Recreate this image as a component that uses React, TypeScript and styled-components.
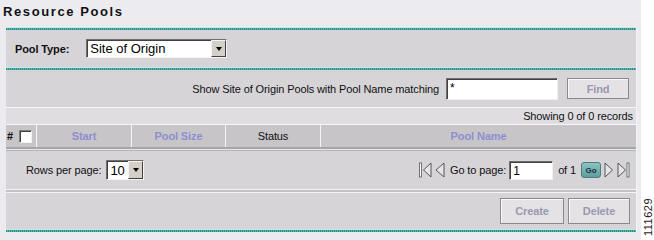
import styled, { createGlobalStyle } from "styled-components";

const Global = createGlobalStyle`
  html, body {
    margin: 0;
    padding: 0;
    background: #ffffff;
  }
  body {
    font-family: "Liberation Sans", Arial, sans-serif;
    font-size: 11px;
    letter-spacing: -0.12px;
    color: #111;
  }
`;

const Page = styled.div`
  display: flex;
  width: 654px;
  height: 240px;
  overflow: hidden;
`;

const Main = styled.div`
  width: 641px;
  height: 240px;
  background: #ebeaee;
  display: flex;
  flex-direction: column;
`;

const Side = styled.div`
  flex: 1;
  display: flex;
  flex-direction: column;
  justify-content: flex-end;
  align-items: center;
  padding-bottom: 4px;
`;

const FigNumber = styled.span`
  writing-mode: vertical-rl;
  transform: rotate(180deg);
  font-size: 11px;
  letter-spacing: 0.5px;
  color: #222;
`;

const TitleBar = styled.div`
  height: 22px;
  display: flex;
  align-items: center;
  padding-left: 3px;
  background: #ecebf0;
  border-bottom: 1px solid #f2e6e6;
  font-size: 13px;
  font-weight: bold;
  letter-spacing: 1.6px;
  color: #111;
`;

const Panel = styled.div`
  margin: 4px 4px 0 6px;
  display: flex;
  flex-direction: column;
  border-right: 1px solid #f4f4f4;
`;

const TealLine = styled.div`
  height: 3px;
  border-top: 1px solid #bfeeea;
  box-sizing: border-box;
  background: repeating-linear-gradient(
    90deg,
    #2f8a84 0px,
    #2f8a84 1px,
    #5cb8ae 1px,
    #5cb8ae 2px
  );
`;

const Row = styled.div<{ $h: number; $bg?: string; $justify?: string }>`
  height: ${({ $h }) => $h}px;
  display: flex;
  align-items: center;
  justify-content: ${({ $justify }) => $justify || "flex-start"};
  background: ${({ $bg }) => $bg || "#d6d4d7"};
  box-sizing: border-box;
`;

const Rule = styled.div<{ $color: string; $h?: number }>`
  height: ${({ $h }) => $h || 1}px;
  background: ${({ $color }) => $color};
`;

const Label = styled.span<{ $bold?: boolean }>`
  font-weight: ${({ $bold }) => ($bold ? "bold" : "normal")};
  white-space: nowrap;
`;

const Select = styled.div<{ $w: number; $h: number; $size: number }>`
  width: ${({ $w }) => $w}px;
  height: ${({ $h }) => $h}px;
  box-sizing: border-box;
  display: flex;
  align-items: center;
  background: #fff;
  border-top: 1px solid #6f6f6f;
  border-left: 1px solid #6f6f6f;
  border-right: 1px solid #f4f4f4;
  border-bottom: 1px solid #f4f4f4;
  box-shadow: inset 1px 1px 0 #404040;
  font-size: ${({ $size }) => $size}px;
  letter-spacing: 0;
  color: #000;
`;

const SelectText = styled.span`
  flex: 1;
  padding-left: 3px;
  white-space: nowrap;
`;

const ArrowBtn = styled.div`
  width: 15px;
  height: 100%;
  box-sizing: border-box;
  display: flex;
  align-items: center;
  justify-content: center;
  background: #d4d0c8;
  border-top: 1px solid #f4f4f4;
  border-left: 1px solid #f4f4f4;
  border-right: 1px solid #404040;
  border-bottom: 1px solid #404040;
  &::after {
    content: "";
    border-left: 3.5px solid transparent;
    border-right: 3.5px solid transparent;
    border-top: 4px solid #000;
  }
`;

const TextInput = styled.div<{ $w: number; $h: number }>`
  width: ${({ $w }) => $w}px;
  height: ${({ $h }) => $h}px;
  box-sizing: border-box;
  background: #fff;
  border-top: 1px solid #6f6f6f;
  border-left: 1px solid #6f6f6f;
  border-right: 1px solid #f0f0f0;
  border-bottom: 1px solid #f0f0f0;
  box-shadow: inset 1px 1px 0 #404040;
  padding: 2px 0 0 3px;
  font-size: 12px;
  color: #000;
`;

const Button = styled.div<{ $w: number; $h: number }>`
  width: ${({ $w }) => $w}px;
  height: ${({ $h }) => $h}px;
  box-sizing: border-box;
  display: flex;
  align-items: center;
  justify-content: center;
  background: #e4e2e4;
  border: 1px solid #8a8a8a;
  box-shadow: inset 1px 1px 0 #f8f8f8;
  font-weight: bold;
  font-size: 11px;
  color: #9a99b2;
`;

const GoButton = styled.div`
  width: 20px;
  height: 16px;
  box-sizing: border-box;
  display: flex;
  align-items: center;
  justify-content: center;
  background: linear-gradient(#8cc4c2, #5e9e9c);
  border: 1px solid #4c7c7c;
  border-radius: 3px;
  font-size: 8px;
  font-weight: bold;
  color: #1c2c48;
`;

const Header = styled.div`
  display: grid;
  grid-template-columns: 31px 95px 94px 95px 1fr;
  height: 22px;
  background: #c7c5c8;
  border-bottom: 2px solid #a6a5a8;
`;

const HeadCell = styled.div<{ $accent?: boolean }>`
  display: flex;
  align-items: center;
  justify-content: center;
  border-right: 1px solid #f4f4f4;
  font-weight: ${({ $accent }) => ($accent ? "bold" : "normal")};
  color: ${({ $accent }) => ($accent ? "#8e8ed2" : "#111")};
  &:last-child {
    border-right: none;
  }
`;

const SelCell = styled.div`
  display: flex;
  align-items: center;
  gap: 6px;
  padding-left: 1px;
  border-right: 1px solid #f4f4f4;
  font-weight: bold;
`;

const CheckBox = styled.div`
  width: 13px;
  height: 13px;
  box-sizing: border-box;
  background: #fff;
  border-top: 1px solid #808080;
  border-left: 1px solid #808080;
  border-right: 1px solid #f0f0f0;
  border-bottom: 1px solid #f0f0f0;
  box-shadow: inset 1px 1px 0 #404040;
`;

const Pager = styled.div`
  display: flex;
  align-items: center;
  gap: 3px;
`;

const Group = styled.div<{ $gap: number }>`
  display: flex;
  align-items: center;
  gap: ${({ $gap }) => $gap}px;
`;

const NavIcon = ({ dir, bar }: { dir: "left" | "right"; bar?: boolean }) => {
  const w = bar ? 13 : 10;
  const tri =
    dir === "left"
      ? bar
        ? "M12 1 L4.5 8 L12 15 Z"
        : "M9 1 L1 8 L9 15 Z"
      : "M1 1 L8.5 8 L1 15 Z";
  const barX = dir === "left" ? 1.5 : 11;
  return (
    <svg width={w} height={16} viewBox={`0 0 ${w} 16`}>
      {bar && <rect x={barX - 1} y={1} width={2} height={14} fill="#fff" stroke="#555" strokeWidth={0.8} />}
      <path d={tri} fill="#e6e6ea" stroke="#555" strokeWidth={1} strokeLinejoin="round" />
    </svg>
  );
};

export default function App() {
  return (
    <>
      <Global />
      <Page>
        <Main>
          <TitleBar>Resource Pools</TitleBar>
          <Panel>
            <TealLine />
            <Row $h={37} style={{ paddingLeft: 9, gap: 17 }}>
              <Label $bold>Pool Type:</Label>
              <Select $w={141} $h={19} $size={13}>
                <SelectText>Site of Origin</SelectText>
                <ArrowBtn />
              </Select>
            </Row>
            <TealLine />
            <Row $h={37} $justify="flex-end" style={{ paddingRight: 7 }}>
              <Group $gap={7}>
                <Label>Show Site of Origin Pools with Pool Name matching</Label>
                <TextInput $w={112} $h={22}>*</TextInput>
                <Button $w={62} $h={21} style={{ marginLeft: 2 }}>
                  Find
                </Button>
              </Group>
            </Row>
            <Rule $color="#f6f6f6" />
            <Row $h={16} $bg="#dfdde0" $justify="flex-end" style={{ paddingRight: 3 }}>
              <Label>Showing 0 of 0 records</Label>
            </Row>
            <Rule $color="#f6f6f6" />
            <Header>
              <SelCell>
                <span>#</span>
                <CheckBox />
              </SelCell>
              <HeadCell $accent>Start</HeadCell>
              <HeadCell $accent>Pool Size</HeadCell>
              <HeadCell>Status</HeadCell>
              <HeadCell $accent>Pool Name</HeadCell>
            </Header>
            <Rule $color="#e6e6e8" />
            <Rule $color="#b4b3b6" />
            <Row $h={38} $justify="space-between" style={{ padding: "0 6px 0 20px" }}>
              <Group $gap={5}>
                <Label>Rows per page:</Label>
                <Select $w={38} $h={20} $size={13}>
                  <SelectText>10</SelectText>
                  <ArrowBtn />
                </Select>
              </Group>
              <Pager>
                <NavIcon dir="left" bar />
                <NavIcon dir="left" />
                <Label style={{ marginLeft: 2 }}>Go to page:</Label>
                <TextInput $w={44} $h={19}>1</TextInput>
                <Label style={{ marginLeft: 2 }}>of 1</Label>
                <GoButton style={{ marginLeft: 2 }}>Go</GoButton>
                <NavIcon dir="right" />
                <NavIcon dir="right" bar />
              </Pager>
            </Row>
            <Rule $color="#f4f4f4" />
            <Rule $color="#c2c1c4" $h={2} />
            <Rule $color="#f4f4f4" />
            <Row $h={36} $justify="flex-end" style={{ paddingRight: 6, gap: 4 }}>
              <Button $w={64} $h={26}>Create</Button>
              <Button $w={62} $h={26}>Delete</Button>
            </Row>
            <TealLine />
          </Panel>
        </Main>
        <Side>
          <FigNumber>111629</FigNumber>
        </Side>
      </Page>
    </>
  );
}
